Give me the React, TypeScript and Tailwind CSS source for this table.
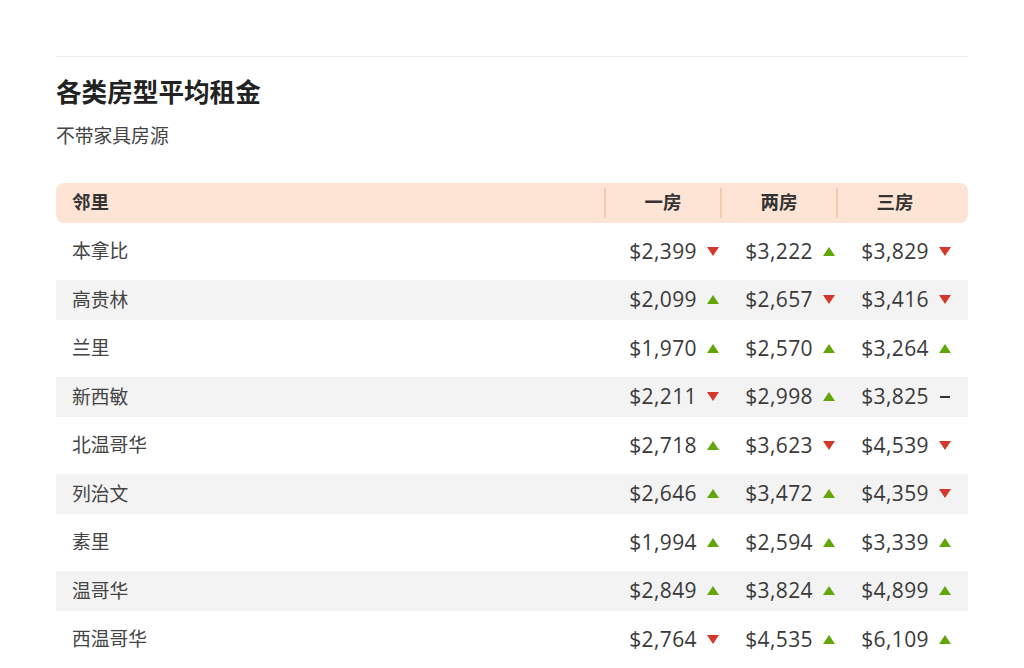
import React from "react";

type Trend = "up" | "down" | "flat";

interface Row {
  name: string;
  cells: [string, Trend][];
}

const rows: Row[] = [
  { name: "本拿比", cells: [["$2,399", "down"], ["$3,222", "up"], ["$3,829", "down"]] },
  { name: "高贵林", cells: [["$2,099", "up"], ["$2,657", "down"], ["$3,416", "down"]] },
  { name: "兰里", cells: [["$1,970", "up"], ["$2,570", "up"], ["$3,264", "up"]] },
  { name: "新西敏", cells: [["$2,211", "down"], ["$2,998", "up"], ["$3,825", "flat"]] },
  { name: "北温哥华", cells: [["$2,718", "up"], ["$3,623", "down"], ["$4,539", "down"]] },
  { name: "列治文", cells: [["$2,646", "up"], ["$3,472", "up"], ["$4,359", "down"]] },
  { name: "素里", cells: [["$1,994", "up"], ["$2,594", "up"], ["$3,339", "up"]] },
  { name: "温哥华", cells: [["$2,849", "up"], ["$3,824", "up"], ["$4,899", "up"]] },
  { name: "西温哥华", cells: [["$2,764", "down"], ["$4,535", "up"], ["$6,109", "up"]] },
];

const cjk = "font-['Noto_Sans_CJK_SC',sans-serif]";
const num = "font-['Open_Sans','Noto_Sans_CJK_SC',sans-serif]";

function TrendMark({ trend }: { trend: Trend }) {
  if (trend === "flat") {
    return (
      <span className="flex h-[9px] w-[12px] items-center justify-center">
        <span className="block h-[2px] w-[10px] bg-[#333333]" />
      </span>
    );
  }
  return (
    <svg width="12" height="9" viewBox="0 0 12 9" className="shrink-0">
      {trend === "up" ? (
        <polygon points="6,0 12,9 0,9" fill="#62a60a" />
      ) : (
        <polygon points="0,0 12,0 6,9" fill="#d2392a" />
      )}
    </svg>
  );
}

export default function App() {
  return (
    <div className={`min-h-[668px] bg-white px-14 ${cjk}`}>
      <div className="h-14" />
      <div className="border-t border-[#f0f0f0]">
        <h2 className="mt-[15px] text-[25.6px] font-bold leading-[38px] text-[#222222]">
          各类房型平均租金
        </h2>
        <p className="mt-[11px] text-[18.8px] leading-[28px] text-[#444444]">不带家具房源</p>

        <div className="mt-[34px] flex flex-col gap-2">
          {/* Header */}
          <div className="grid h-10 grid-cols-[1fr_116px_116px_116px] rounded-lg bg-[#fee4d4] pr-4 text-[18.5px] font-bold text-[#333333]">
            <div className="flex items-center pb-[2px] pl-4">邻里</div>
            {["一房", "两房", "三房"].map((h) => (
              <div key={h} className="flex items-center">
                <span className="h-[30px] border-l-2 border-[#f7c9ab]" />
                <span className="flex-1 pb-[2px] text-center">{h}</span>
              </div>
            ))}
          </div>

          {rows.map((row, i) => (
            <div
              key={row.name}
              className={`grid h-[40.5px] grid-cols-[1fr_116px_116px_116px] items-center pr-4 ${
                i % 2 === 1 ? "bg-[#f3f3f3]" : "bg-white"
              }`}
            >
              <div className="pb-[2px] pl-4 text-[18.8px] text-[#444444]">{row.name}</div>
              {row.cells.map(([value, trend], j) => (
                <div key={j} className="flex items-center justify-end gap-[10px] pr-[1px]">
                  <span
                    className={`${num} text-[21px] font-normal leading-none tracking-[0.4px] text-[#3a3a3a]`}
                  >
                    {value}
                  </span>
                  <TrendMark trend={trend} />
                </div>
              ))}
            </div>
          ))}
        </div>
      </div>
    </div>
  );
}
